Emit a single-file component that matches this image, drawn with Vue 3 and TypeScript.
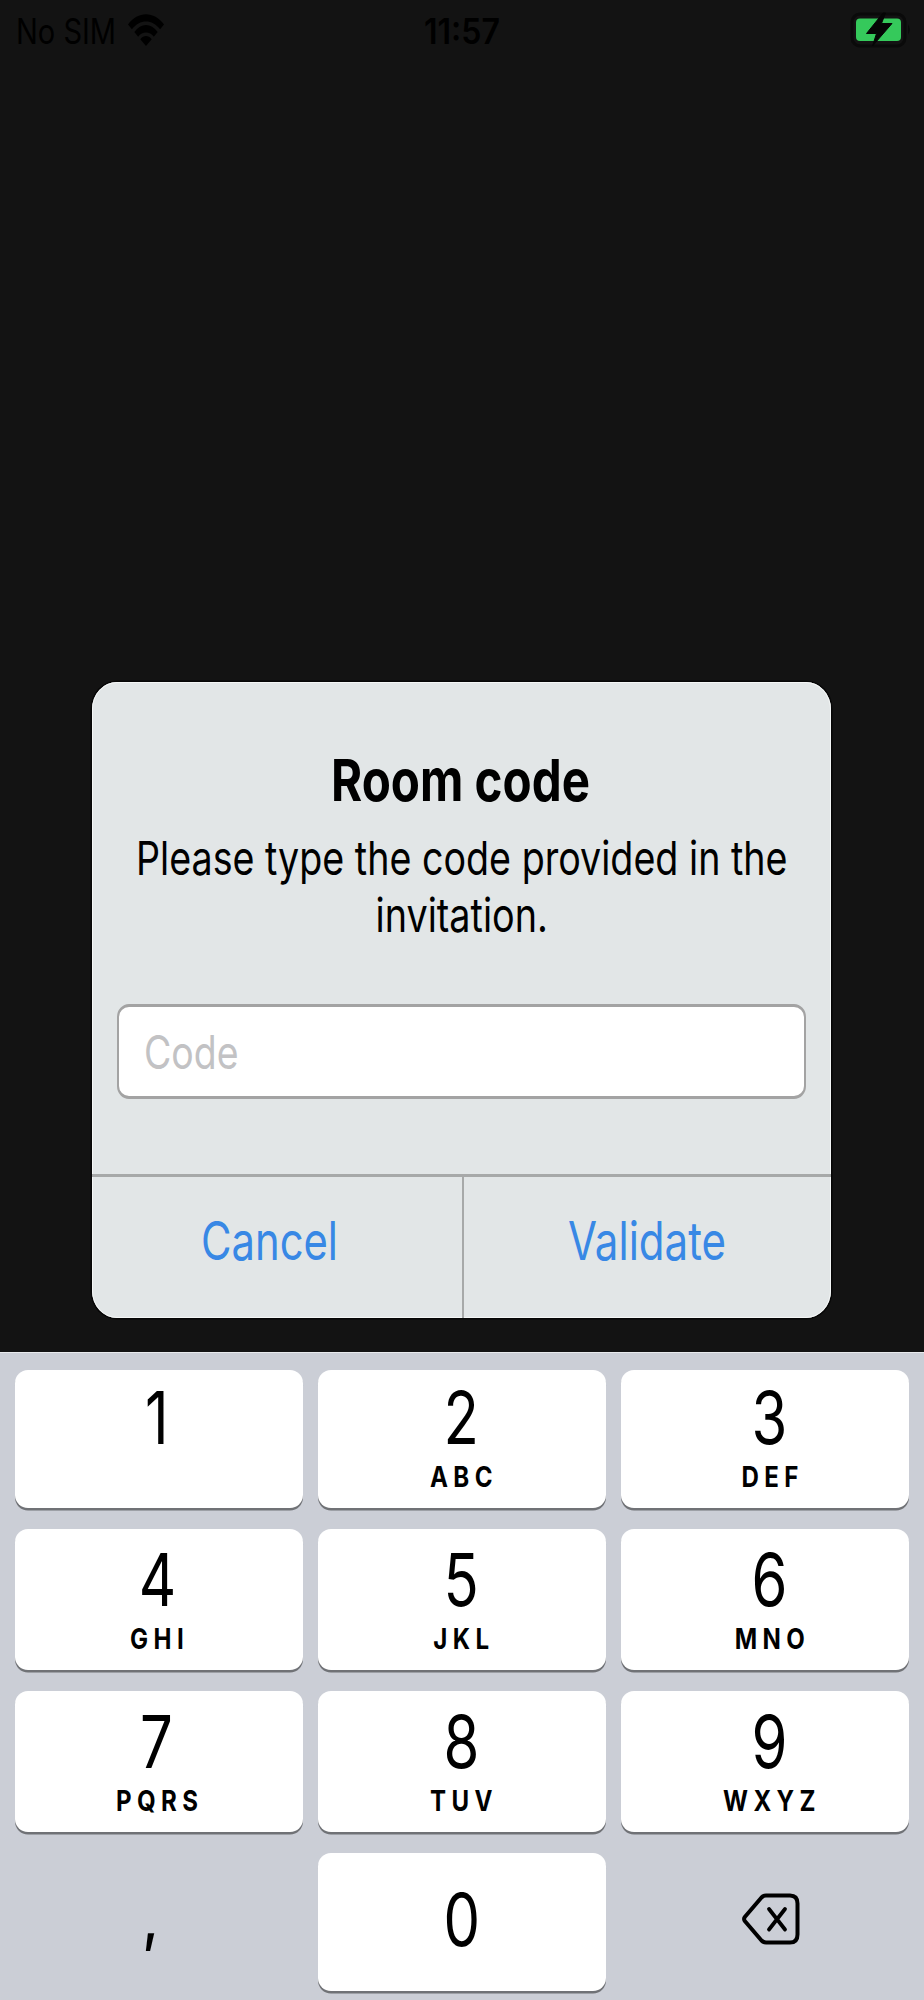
<script setup lang="ts">
interface Key {
  digit: string
  letters?: string
}

const rows: Key[][] = [
  [{ digit: '1' }, { digit: '2', letters: 'ABC' }, { digit: '3', letters: 'DEF' }],
  [{ digit: '4', letters: 'GHI' }, { digit: '5', letters: 'JKL' }, { digit: '6', letters: 'MNO' }],
  [{ digit: '7', letters: 'PQRS' }, { digit: '8', letters: 'TUV' }, { digit: '9', letters: 'WXYZ' }],
]
const keys: Key[] = rows.flat()
</script>

<template>
  <div class="screen">
    <header class="status">
      <div class="carrier">
        <svg class="line" width="100" height="60">
          <text x="0" y="43.6" textLength="100" lengthAdjust="spacingAndGlyphs">No SIM</text>
        </svg>
        <svg class="wifi" width="38" height="34" viewBox="0 0 38 34">
          <path d="M1 11.5C11 -2.2 27 -2.2 37 11.5L33.1 16.3C25.200 5.800 12.800 5.800 4.900 16.300Z" />
          <path d="M7.300 19C14 9.800 24 9.800 30.700 19L26.800 23.700C22.600 18.200 15.400 18.200 11.200 23.700Z" />
          <path d="M13.300 26.200C16.500 22 21.500 22 24.700 26.200L19 33Z" />
        </svg>
      </div>
      <svg class="line clock" width="77" height="60">
        <text x="0" y="43.6" textLength="76" lengthAdjust="spacingAndGlyphs">11:57</text>
      </svg>
      <svg class="battery" width="62" height="36" viewBox="0 0 62 36">
        <rect x="2" y="2" width="53" height="32" rx="8" fill="#131313" stroke="#0a0a0a" stroke-width="3" />
        <rect x="6" y="6.500" width="45" height="22.500" rx="4" fill="#35c95b" />
        <path d="M58 12.500q3.500 5 0 10z" fill="#0a0a0a" />
        <path d="M33 1L16.500 21.500H26.500L22.500 34L42 11.500H31.500L35.500 1Z" fill="#050505" stroke="#050505" stroke-width="1" />
      </svg>
    </header>

    <section class="dialog">
      <svg class="line title" width="259" height="74">
        <text x="0" y="61" textLength="259" lengthAdjust="spacingAndGlyphs">Room code</text>
      </svg>
      <svg class="line message" width="660" height="57">
        <text x="4" y="41.300" textLength="651.500" lengthAdjust="spacingAndGlyphs">Please type the code provided in the</text>
      </svg>
      <svg class="line message" width="180" height="57">
        <text x="3.500" y="40.700" textLength="172.500" lengthAdjust="spacingAndGlyphs">invitation.</text>
      </svg>
      <div class="field">
        <svg class="line placeholder" width="95" height="88">
          <text x="0" y="61.500" textLength="94.500" lengthAdjust="spacingAndGlyphs">Code</text>
        </svg>
      </div>
      <div class="actions">
        <div class="action">
          <svg class="line" width="137" height="138">
            <text x="0" y="82.500" textLength="137" lengthAdjust="spacingAndGlyphs">Cancel</text>
          </svg>
        </div>
        <div class="action">
          <svg class="line" width="158" height="138">
            <text x="0" y="82.500" textLength="158" lengthAdjust="spacingAndGlyphs">Validate</text>
          </svg>
        </div>
      </div>
    </section>

    <section class="keyboard">
      <div v-for="key in keys" :key="key.digit" class="key">
        <span class="digit">{{ key.digit }}</span>
        <span v-if="key.letters" class="letters">{{ key.letters }}</span>
      </div>
      <div class="key plain"><span class="comma">,</span></div>
      <div class="key zero"><span class="digit">0</span></div>
      <div class="key plain">
        <svg class="erase" width="58" height="52" viewBox="0 0 58 52" fill="none" stroke="#000" stroke-linecap="round" stroke-linejoin="round">
          <path stroke-width="4" d="M23 2.500H47Q54.500 2.500 54.500 10.500V41.500Q54.500 49.500 47 49.500H23Q20.500 49.500 18.500 47.500L1.800 28Q0.400 26 1.800 24L18.500 4.500Q20.500 2.500 23 2.500Z" />
          <path stroke-width="3.800" d="M26 16L42 36.500M42 16L26 36.500" />
        </svg>
      </div>
    </section>
  </div>
</template>

<style>
body {
  margin: 0;
  background: #131313;
}
</style>

<style scoped>
.screen {
  width: 924px;
  height: 2000px;
  display: flex;
  flex-direction: column;
  background: #131313;
  color: #000;
  font-family: Inter, "Liberation Sans", sans-serif;
  overflow: hidden;
}
.line {
  display: block;
  flex: none;
  overflow: visible;
  fill: currentColor;
}
.status {
  height: 60px;
  display: grid;
  grid-template-columns: 423.500px 1fr 74px;
  font-size: 35px;
}
.carrier {
  display: flex;
  padding-left: 16px;
}
.wifi {
  margin: 13px 0 0 11px;
}
.clock {
  font-weight: 600;
}
.battery {
  margin-top: 11.500px;
}
.dialog {
  box-sizing: border-box;
  width: 739px;
  height: 636px;
  margin: 622px 0 0 92px;
  padding-top: 58px;
  display: flex;
  flex-direction: column;
  align-items: center;
  flex: none;
  border-radius: 25px / 27px;
  background: #e2e6e7;
  box-shadow: inset 0 0 0 1px #f4f6f6, 0 0 0 1.500px #060606;
}
.title {
  font-size: 58px;
  font-weight: 700;
  margin: 0 2px 20px 0;
}
.message {
  font-size: 46.500px;
}
.field {
  box-sizing: border-box;
  width: 689px;
  height: 95px;
  margin-top: 56px;
  padding-left: 25px;
  border: 2px solid #a3a3a3;
  border-top-width: 3px;
  border-bottom-width: 3px;
  border-radius: 12px / 13px;
  background: #fff;
  color: #c2c2c4;
  font-size: 46px;
}
.actions {
  width: 100%;
  margin-top: 75px;
  flex: 1;
  display: grid;
  grid-template-columns: 1fr 1fr;
  border-top: 3px solid #a7a9a9;
}
.action {
  display: flex;
  justify-content: center;
  color: #3888e5;
  font-size: 53px;
}
.action + .action {
  border-left: 2px solid #a7a9a9;
}
.action:first-child {
  padding-right: 14px;
}
.keyboard {
  flex: 1;
  box-sizing: border-box;
  margin-top: 34px;
  padding: 17px 15px 0;
  display: grid;
  grid-template-columns: repeat(3, 288px);
  grid-template-rows: 138px 141px 141px 138px;
  column-gap: 15px;
  row-gap: 21px;
  border-top: 1px solid #e8eaed;
  background: #cbced6;
}
.key {
  display: flex;
  flex-direction: column;
  align-items: center;
  box-sizing: border-box;
  padding-top: 12px;
  border-radius: 13px;
  background: #fff;
  box-shadow: 0 2.500px 0 #707276;
}
.key:nth-child(n + 4) {
  padding-top: 15px;
}
.key:nth-child(3n + 1) {
  padding-right: 4px;
}
.key:nth-child(3n + 2) {
  padding-right: 1px;
}
.key:nth-child(3n) {
  padding-left: 9px;
}
.digit {
  height: 72px;
  line-height: 72px;
  font-size: 72.500px;
  transform: scaleX(0.8);
}
.letters {
  height: 36px;
  margin-top: 5px;
  line-height: 36px;
  font-size: 29px;
  font-weight: 700;
  letter-spacing: 6.500px;
  margin-right: -5.500px;
  transform: scaleX(0.83);
}
.key.zero {
  padding-top: 31px;
}
.key.plain {
  background: none;
  box-shadow: none;
}
.comma {
  margin: 20px 13px 0 0;
  line-height: 60px;
  font-size: 60px;
  font-weight: 600;
  transform: scaleX(0.8);
}
.erase {
  margin: 25px 0 0 4px;
  overflow: visible;
}
</style>
